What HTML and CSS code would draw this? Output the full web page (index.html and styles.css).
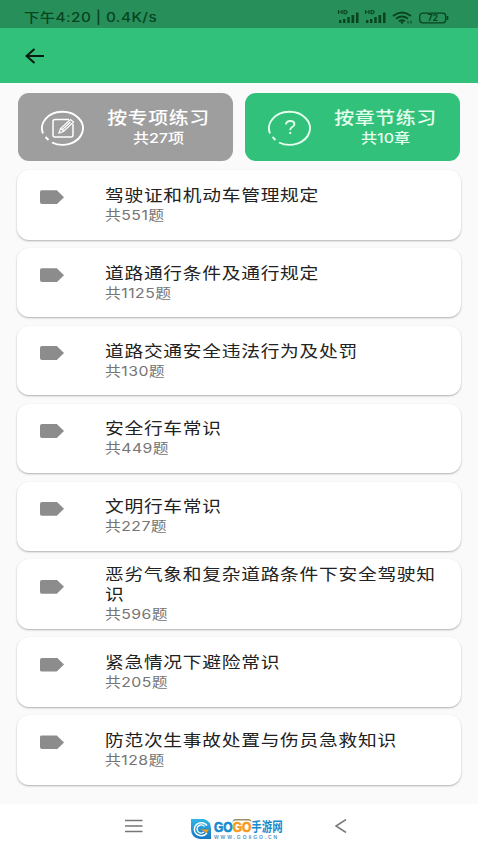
FILE: index.html
```html
<!DOCTYPE html>
<html lang="zh-CN">
<head>
  <meta charset="UTF-8" />
  <meta name="viewport" content="width=device-width, initial-scale=1.0"/>
  <title>章节练习</title>
  <link rel="stylesheet" href="styles.css">
</head>
<body>
<div class="status-bar">
  <span class="status-time">下午4:20 | 0.4K/s</span>
  <svg class="status-icons" width="114" height="16" viewBox="0 0 114 16">
    <g id="signal">
      <path d="M1.500 1v4M5 1v4M1.500 3H5M7 1.500h1.700l1.300 1v1.200l-1.300 1H7z" fill="none" stroke="currentColor" stroke-width="1.100"/>
      <path d="M2 11h2.400v3H2zM6 10h2.400v4H6zM10.300 8h2.400v6h-2.400zM14.500 6h2.700v8h-2.700zM19 3.500h2.500V14H19z" fill="currentColor"/>
    </g>
    <use href="#signal" x="27"/>
    <g fill="none" stroke="currentColor" stroke-width="1.900">
      <path d="M56 7q9-7 18 0M59 9.800q6-4.500 12 0M62 12.300q3-2 6 0"/>
    </g>
    <circle cx="65" cy="13.500" r="1.200" fill="currentColor"/>
    <path d="M71 12v2.500M74 11.500v3" stroke="currentColor"/>
    <rect x="82.700" y="4.200" width="26" height="9.600" rx="3" fill="none" stroke="currentColor" stroke-width="1.300"/>
    <path d="M110.500 7v4" stroke="currentColor" stroke-width="1.600"/>
    <text x="96" y="12.300" text-anchor="middle" class="battery">72</text>
  </svg>
</div>

<header>
  <svg width="20" height="16" viewBox="0 0 20 16" fill="none" stroke="#071b10" stroke-width="2">
    <path d="M19 8H2M9.500 1L1.500 8l8 7"/>
  </svg>
</header>

<main>
  <div class="tabs">
    <div class="tab">
      <svg width="44" height="36" viewBox="0 0 44 36" fill="none" stroke="#fff" stroke-width="1.900">
        <path d="M11 32.500A20.500 16.500 0 1 0 2 23.500M4.500 27l3 3"/>
        <g stroke-width="1.500">
          <path d="M28 9.500H14q-2 0-2 2V25q0 2 2 2h16q2 0 2-2V14"/>
          <path d="M18 23l1.500-4.500L29.500 9.500l3 2.500-10 9.500zM20 18.500l2.500 2.500M21.500 19.500l8-7.500" stroke-width="1.200"/>
        </g>
      </svg>
      <div class="tab-text">
        <h2>按专项练习</h2>
        <p>共27项</p>
      </div>
    </div>
    <div class="tab active">
      <svg width="44" height="36" viewBox="0 0 44 36" fill="none" stroke="#e4ffed" stroke-width="1.900">
        <path d="M11 32.500A20.500 16.500 0 1 0 2 23.500M4.500 27l3 3"/>
        <path d="M18 14.500q0-3.500 4.200-3.500t4.200 3.200q0 1.800-2.200 2.800-2 1-2 3.200M22.200 22v2"/>
      </svg>
      <div class="tab-text">
        <h2>按章节练习</h2>
        <p>共10章</p>
      </div>
    </div>
  </div>

  <ul class="chapters">
    <li>
      <i class="tag"></i>
      <div class="info"><h3>驾驶证和机动车管理规定</h3><p>共551题</p></div>
    </li>
    <li>
      <i class="tag"></i>
      <div class="info"><h3>道路通行条件及通行规定</h3><p>共1125题</p></div>
    </li>
    <li>
      <i class="tag"></i>
      <div class="info"><h3>道路交通安全违法行为及处罚</h3><p>共130题</p></div>
    </li>
    <li>
      <i class="tag"></i>
      <div class="info"><h3>安全行车常识</h3><p>共449题</p></div>
    </li>
    <li>
      <i class="tag"></i>
      <div class="info"><h3>文明行车常识</h3><p>共227题</p></div>
    </li>
    <li>
      <i class="tag"></i>
      <div class="info"><h3>恶劣气象和复杂道路条件下安全驾驶知识</h3><p>共596题</p></div>
    </li>
    <li>
      <i class="tag"></i>
      <div class="info"><h3>紧急情况下避险常识</h3><p>共205题</p></div>
    </li>
    <li>
      <i class="tag"></i>
      <div class="info"><h3>防范次生事故处置与伤员急救知识</h3><p>共128题</p></div>
    </li>
  </ul>
</main>

<footer>
  <svg width="18" height="14" viewBox="0 0 18 14" stroke="#777" stroke-width="1.500">
    <path d="M0 1.500h17.500M0 7h17.500M0 12.500h17.500"/>
  </svg>
  <div class="logo">
    <svg width="22" height="22" viewBox="0 0 22 22">
      <defs>
        <linearGradient id="blue" x1="0" y1="0" x2="0" y2="1">
          <stop offset="0" stop-color="#2fb6e6"/>
          <stop offset="1" stop-color="#1676c4"/>
        </linearGradient>
      </defs>
      <path d="M1 1h13q7 2 7 10v10H10Q1 20 1 11z" fill="url(#blue)"/>
      <path d="M17 7.500A7 6.500 0 1 0 17 15" fill="none" stroke="#fff" stroke-width="1.500"/>
      <path d="M14.500 8.500A4.200 4 0 1 0 14 14" fill="none" stroke="#fff" stroke-width="1.400"/>
      <path d="M10 11.500h9l-3 4-1.500-2z" fill="#f79a1c"/>
    </svg>
    <div class="logo-text">
      <p class="logo-word"><b>GO</b><b class="home">GO</b><span>手游网</span></p>
      <p class="logo-url">WWW.GO9GO.CN</p>
    </div>
  </div>
  <svg width="12" height="14" viewBox="0 0 12 14" fill="none" stroke="#777" stroke-width="1.500">
    <path d="M11 .5L1 7l10 6.500"/>
  </svg>
</footer>
</body>
</html>
```

FILE: styles.css
```css
* { box-sizing: border-box; margin: 0; padding: 0; }
body {
  height: 850px;
  display: flex;
  flex-direction: column;
  overflow: hidden;
  font-family: Roboto, "Noto Sans CJK SC", sans-serif;
  background: #fafafa;
  color: #222;
}
h2, h3 { font-weight: 400; }

.status-bar {
  height: 28px;
  padding: 5px 27px 0 24px;
  display: flex;
  justify-content: space-between;
  align-items: center;
  background: #27905a;
  color: #09431f;
}
.status-time {
  font-family: Inter, "Noto Sans CJK SC", sans-serif;
  font-size: 13px;
  font-weight: 500;
  line-height: 20px;
  letter-spacing: 0.35px;
  white-space: nowrap;
  transform: scaleX(1.18);
  transform-origin: left;
}
.battery {
  font: bold 8.5px Inter, sans-serif;
  fill: currentColor;
}
header {
  height: 55px;
  padding: 0 25px;
  display: flex;
  align-items: center;
  background: #32c17b;
}

main {
  flex: 1;
  padding: 10px 17px 0;
}
.tabs {
  display: grid;
  grid-template-columns: 1fr 1fr;
  gap: 12px;
  padding: 0 1px;
}
.tab {
  height: 68px;
  padding: 1px 0 0 23px;
  display: flex;
  align-items: center;
  gap: 22px;
  border-radius: 11px;
  background: #9e9e9e;
  color: #fff;
}
.tab.active {
  background: #32c17b;
  color: #e4ffed;
}
.tab-text {
  width: 103px;
  text-align: center;
  white-space: nowrap;
}
.tab h2 {
  font-size: 17px;
  font-weight: 500;
  line-height: 21px;
  letter-spacing: 0.5px;
  transform: scaleX(1.17);
}
.tab p {
  font-family: Inter, "Noto Sans CJK SC", sans-serif;
  font-size: 13.5px;
  font-weight: 500;
  line-height: 19px;
  transform: scaleX(1.19);
}

.chapters {
  margin-top: 9px;
  display: grid;
  gap: 8.4px;
  list-style: none;
}
.chapters li {
  height: 69.5px;
  padding-left: 23px;
  display: flex;
  align-items: center;
  gap: 41px;
  background: #fff;
  border-radius: 12px;
  box-shadow: 0 1px 2px rgba(0, 0, 0, 0.3);
}
.tag {
  width: 24px;
  height: 14px;
  margin-top: -15px;
  border-radius: 2px;
  background: #8c8c8c;
  clip-path: polygon(0 0, 70% 0, 100% 50%, 70% 100%, 0 100%);
}
.info {
  width: 288px;
  padding-top: 1px;
  transform: scaleX(1.17);
  transform-origin: left;
}
.info h3 {
  font-size: 16px;
  line-height: 20px;
  letter-spacing: 0.63px;
}
.info p {
  font-family: Inter, "Noto Sans CJK SC", sans-serif;
  font-size: 13.5px;
  line-height: 19px;
  letter-spacing: 0.4px;
  color: #757575;
}

footer {
  height: 46px;
  padding: 0 131px 2px 125px;
  display: flex;
  justify-content: space-between;
  align-items: center;
  background: #fff;
}
.logo {
  width: 98px;
  display: flex;
  align-items: center;
  gap: 2px;
  padding-top: 6px;
}
.logo-text {
  width: 70px;
  white-space: nowrap;
}
.logo-word {
  display: flex;
  width: 82px;
  height: 15px;
  font: bold 15px/15px "Liberation Sans", "Noto Sans CJK SC", sans-serif;
  color: #168bce;
  transform: scaleX(0.8);
  transform-origin: left;
}
.logo-word b {
  -webkit-text-stroke: 0.7px currentColor;
}
.logo-word .home {
  color: #f79a1c;
  box-shadow: inset 0 1.5px #9a8d6a;
  border-radius: 4px 4px 0 0;
}
.logo-word span {
  font-size: 13px;
}
.logo-url {
  font: bold 5px/6px "Liberation Sans", sans-serif;
  letter-spacing: 1.9px;
  color: #5b9ac6;
}
```
